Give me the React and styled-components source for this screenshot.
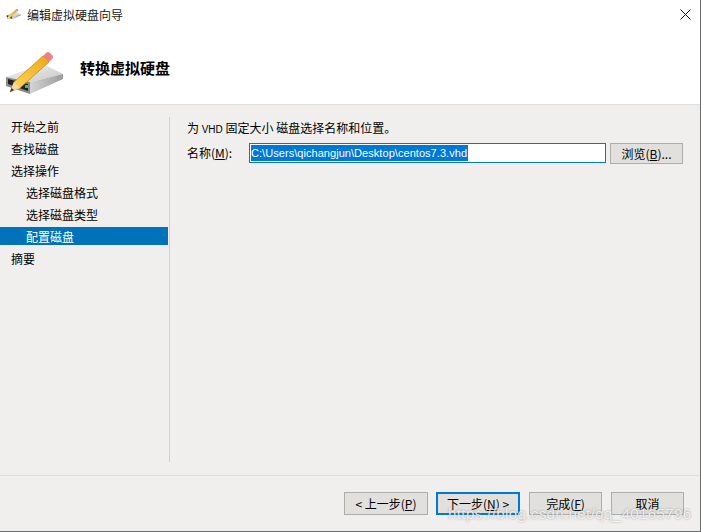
import React from 'react';
import styled, { createGlobalStyle } from 'styled-components';

const GlobalStyle = createGlobalStyle`
  html, body {
    margin: 0;
    padding: 0;
    background: #f0efee;
  }
`;

const Window = styled.div`
  box-sizing: border-box;
  width: 701px;
  height: 532px;
  display: flex;
  flex-direction: column;
  position: relative;
  overflow: hidden;
  background: #f0efee;
  border-right: 1px solid #6d6d6d;
  border-bottom: 1px solid #6d6d6d;
  font-family: "Noto Sans CJK SC", "Liberation Sans", sans-serif;
  font-size: 12px;
  color: #000;
`;

const TitleBar = styled.div`
  height: 30px;
  flex: none;
  box-sizing: border-box;
  display: flex;
  align-items: center;
  padding: 0 0 2px 6px;
  gap: 6px;
  background: #fff;
`;

const TitleText = styled.span`
  flex: 1;
  color: #1a1a1a;
`;

const CloseButton = styled.div`
  width: 30px;
  height: 28px;
  display: flex;
  align-items: center;
  justify-content: center;
`;

const Banner = styled.div`
  height: 75px;
  flex: none;
  box-sizing: border-box;
  display: flex;
  align-items: flex-start;
  padding: 19px 0 0 4px;
  gap: 16px;
  background: #fff;
  border-bottom: 1px solid #dfdfdf;
`;

const BannerTitle = styled.h1`
  margin: 9px 0 0;
  font-size: 15px;
  font-weight: 700;
  line-height: 20px;
`;

const Body = styled.div`
  flex: 1;
  display: flex;
  min-height: 0;
`;

const Nav = styled.div`
  width: 168px;
  flex: none;
  padding-top: 12px;
`;

const NavItem = styled.div`
  height: 18px;
  line-height: 20px;
  margin-bottom: 4px;
  padding-left: ${props => (props.$sub ? 26 : 11)}px;
  background: ${props => (props.$active ? '#0072b9' : 'transparent')};
  color: ${props => (props.$active ? '#fff' : '#000')};
`;

const Divider = styled.div`
  width: 1px;
  margin: 12px 0 13px 1px;
  background: #d0cfcd;
`;

const Content = styled.div`
  flex: 1;
  padding: 14px 17px 0 17px;
`;

const Hint = styled.div`
  line-height: 17px;
  height: 17px;
`;

const HintLatin = styled.span`
  font-family: "Liberation Sans", sans-serif;
  font-size: 10px;
`;

const FieldRow = styled.div`
  display: flex;
  align-items: flex-start;
  margin-top: 7px;
`;

const FieldLabel = styled.label`
  width: 62px;
  flex: none;
  line-height: 20px;
`;

const PathInput = styled.div`
  box-sizing: border-box;
  width: 357px;
  height: 20px;
  flex: none;
  border: 1px solid #0078d7;
  background: #fff;
  padding: 1px 0 0 1px;
  display: flex;
`;

const Selected = styled.span`
  background: #0078d7;
  color: #fff;
  height: 16px;
  line-height: 16px;
  padding: 0 1px 0 0;
  font-family: "Liberation Sans", sans-serif;
  font-size: 11px;
  letter-spacing: 0.05px;
`;

const Button = styled.button`
  box-sizing: border-box;
  height: ${props => props.$h || 23}px;
  width: ${props => props.$w}px;
  flex: none;
  padding: 0;
  margin-left: ${props => props.$gap || 0}px;
  border: ${props => (props.$primary ? '2px solid #0078d7' : '1px solid #adadad')};
  background: #e1e0dd;
  color: #000;
  font: inherit;
  line-height: 1;
`;

const Footer = styled.div`
  height: 56px;
  flex: none;
  box-sizing: border-box;
  display: flex;
  justify-content: flex-end;
  align-items: flex-start;
  padding: 16px 16px 0 0;
  border-top: 1px solid #dfdedc;
`;

const Watermark = styled.div`
  position: absolute;
  left: 448px;
  top: 505px;
  font-family: "Liberation Sans", sans-serif;
  font-size: 15px;
  letter-spacing: 0.4px;
  color: rgba(255, 255, 255, 0.78);
  text-shadow: 0 0 2px rgba(90, 90, 90, 0.6);
  white-space: nowrap;
  pointer-events: none;
`;

const DiskIcon = ({ id, width }) => (
  <svg width={width} height={width * 0.8} viewBox="0 0 60 48">
    <defs>
      <linearGradient id={`${id}-top`} x1="0" y1="0" x2="1" y2="1">
        <stop offset="0" stopColor="#f4f4f4" />
        <stop offset="1" stopColor="#c8c8c8" />
      </linearGradient>
      <linearGradient id={`${id}-side`} x1="0" y1="0" x2="1" y2="0">
        <stop offset="0" stopColor="#d4d4d4" />
        <stop offset="1" stopColor="#9c9c9c" />
      </linearGradient>
      <linearGradient id={`${id}-pencil`} x1="0" y1="1" x2="1" y2="0">
        <stop offset="0" stopColor="#ffd95a" />
        <stop offset="1" stopColor="#eda81a" />
      </linearGradient>
    </defs>
    <path d="M2 28 L39 15 L59 25 L26 33 Z" fill={`url(#${id}-top)`} />
    <path d="M26 33 L59 25 V30 L26 45 Z" fill={`url(#${id}-side)`} />
    <path d="M2 28 L26 33 V45 L2 37 Z" fill="#8a8a8a" />
    <path d="M4 30 L24 35 V42 L4 35 Z" fill="#222" />
    <rect x="21" y="36" width="3" height="3" fill="#1fd14a" />
    <path d="M6 43 L10 33 L39 7 L45 13 L16 39 Z" fill={`url(#${id}-pencil)`} stroke="#c08312" strokeWidth="0.7" />
    <path d="M6 43 L10 33 L16 39 Z" fill="#efd9ad" />
    <path d="M6 43 L7.5 39 L10 41 Z" fill="#333" />
    <path d="M39 7 L42 4 Q44 2 46 4 L48 6 Q50 8 48 10 L45 13 Z" fill="#ef7f84" />
  </svg>
);

const CloseIcon = () => (
  <svg width="11" height="11" viewBox="0 0 11 11">
    <path d="M0.5 0.5 L10.5 10.5 M10.5 0.5 L0.5 10.5" stroke="#111" strokeWidth="1" fill="none" />
  </svg>
);

const navItems = [
  { label: '开始之前' },
  { label: '查找磁盘' },
  { label: '选择操作' },
  { label: '选择磁盘格式', sub: true },
  { label: '选择磁盘类型', sub: true },
  { label: '配置磁盘', sub: true, active: true },
  { label: '摘要' }
];

const App = () => (
  <>
    <GlobalStyle />
    <Window>
      <TitleBar>
        <DiskIcon id="small" width={15} />
        <TitleText>编辑虚拟硬盘向导</TitleText>
        <CloseButton>
          <CloseIcon />
        </CloseButton>
      </TitleBar>
      <Banner>
        <DiskIcon id="large" width={60} />
        <BannerTitle>转换虚拟硬盘</BannerTitle>
      </Banner>
      <Body>
        <Nav>
          {navItems.map(item => (
            <NavItem key={item.label} $sub={item.sub} $active={item.active}>
              {item.label}
            </NavItem>
          ))}
        </Nav>
        <Divider />
        <Content>
          <Hint>为 <HintLatin>VHD</HintLatin> 固定大小 磁盘选择名称和位置。</Hint>
          <FieldRow>
            <FieldLabel>名称(<u>M</u>):</FieldLabel>
            <PathInput>
              <Selected>C:\Users\qichangjun\Desktop\centos7.3.vhd</Selected>
            </PathInput>
            <Button $w={73} $h={21} $gap={4}>浏览(<u>B</u>)...</Button>
          </FieldRow>
        </Content>
      </Body>
      <Footer>
        <Button $w={84}>&lt; 上一步(<u>P</u>)</Button>
        <Button $w={84} $gap={8} $primary>下一步(<u>N</u>) &gt;</Button>
        <Button $w={73} $gap={9}>完成(<u>F</u>)</Button>
        <Button $w={73} $gap={9}>取消</Button>
      </Footer>
      <Watermark>https://blog.csdn.net/qq_40165796</Watermark>
    </Window>
  </>
);

export default App;
